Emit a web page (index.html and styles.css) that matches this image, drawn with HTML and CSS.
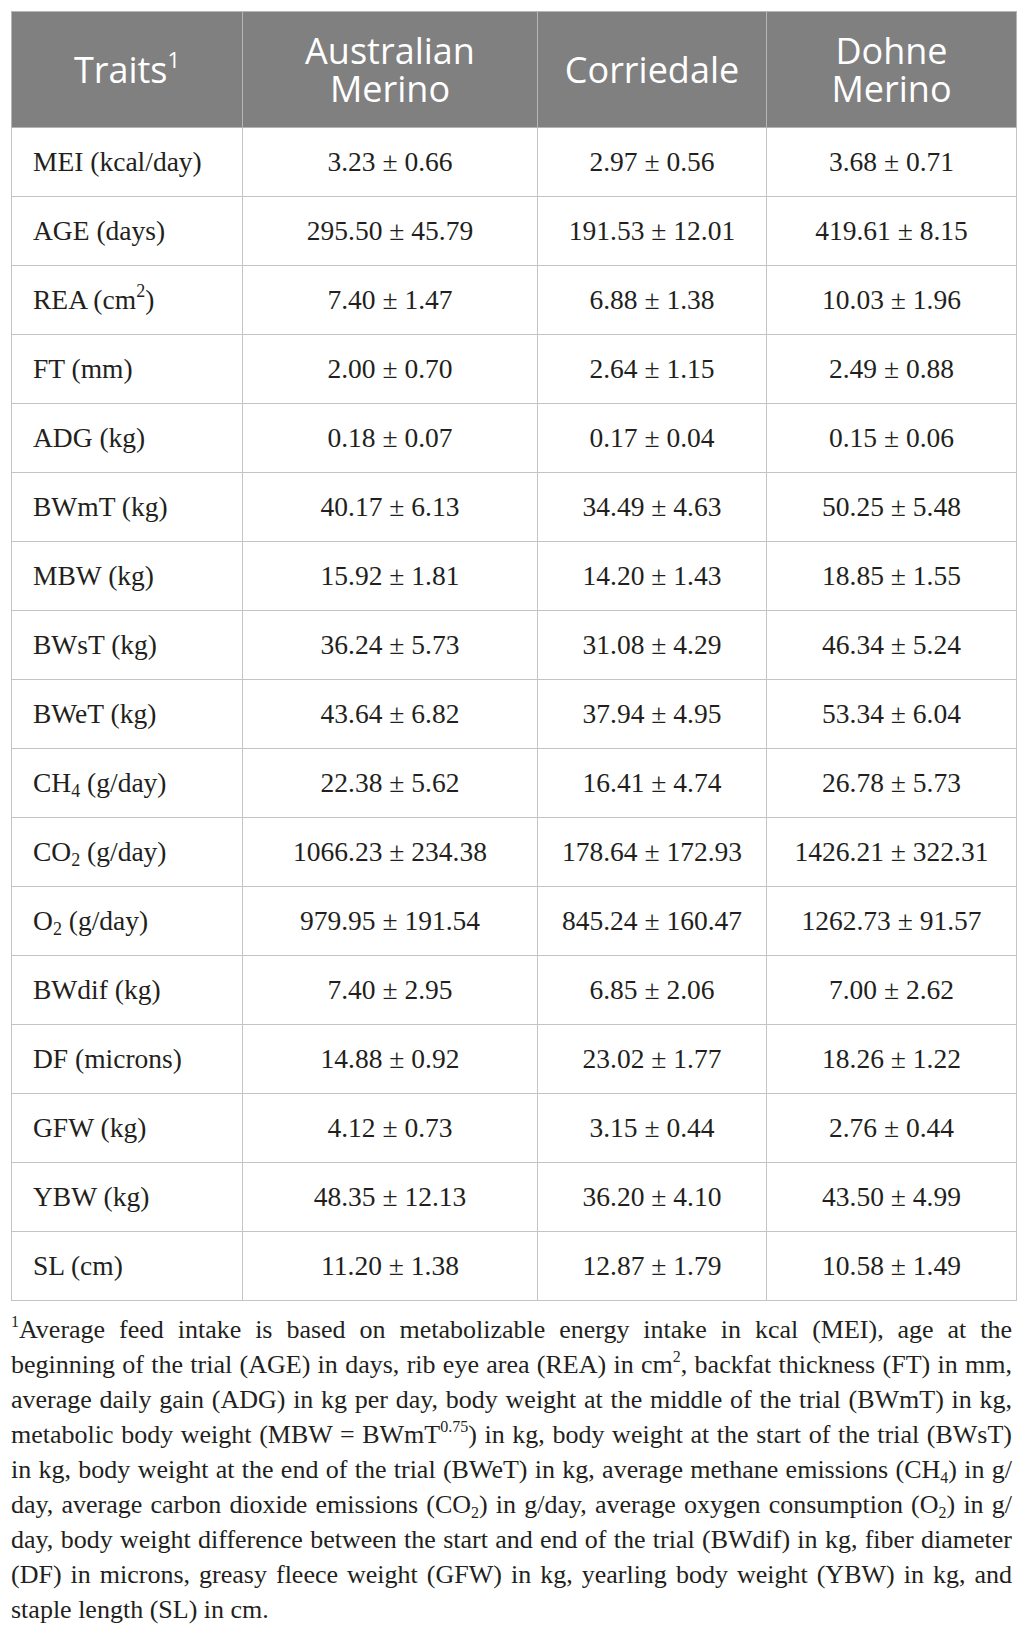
FILE: index.html
```html
<!DOCTYPE html>
<html lang="en">

<head>
    <meta charset="UTF-8">
    <meta name="viewport" content="width=device-width, initial-scale=1.0">
    <title>Traits by breed</title>
    <link rel="stylesheet" href="styles.css">
</head>

<body>
    <div class="tableWrap">
        <table class="traits">
            <thead>
                <tr>
                    <th class="colTrait">Traits<sup>1</sup></th>
                    <th class="colAm">Australian<br>Merino</th>
                    <th class="colCo">Corriedale</th>
                    <th class="colDm">Dohne<br>Merino</th>
                </tr>
            </thead>
            <tbody>
                <tr><td>MEI (kcal/day)</td><td>3.23 ± 0.66</td><td>2.97 ± 0.56</td><td>3.68 ± 0.71</td></tr>
                <tr><td>AGE (days)</td><td>295.50 ± 45.79</td><td>191.53 ± 12.01</td><td>419.61 ± 8.15</td></tr>
                <tr><td>REA (cm<sup>2</sup>)</td><td>7.40 ± 1.47</td><td>6.88 ± 1.38</td><td>10.03 ± 1.96</td></tr>
                <tr><td>FT (mm)</td><td>2.00 ± 0.70</td><td>2.64 ± 1.15</td><td>2.49 ± 0.88</td></tr>
                <tr><td>ADG (kg)</td><td>0.18 ± 0.07</td><td>0.17 ± 0.04</td><td>0.15 ± 0.06</td></tr>
                <tr><td>BWmT (kg)</td><td>40.17 ± 6.13</td><td>34.49 ± 4.63</td><td>50.25 ± 5.48</td></tr>
                <tr><td>MBW (kg)</td><td>15.92 ± 1.81</td><td>14.20 ± 1.43</td><td>18.85 ± 1.55</td></tr>
                <tr><td>BWsT (kg)</td><td>36.24 ± 5.73</td><td>31.08 ± 4.29</td><td>46.34 ± 5.24</td></tr>
                <tr><td>BWeT (kg)</td><td>43.64 ± 6.82</td><td>37.94 ± 4.95</td><td>53.34 ± 6.04</td></tr>
                <tr><td>CH<sub>4</sub> (g/day)</td><td>22.38 ± 5.62</td><td>16.41 ± 4.74</td><td>26.78 ± 5.73</td></tr>
                <tr><td>CO<sub>2</sub> (g/day)</td><td>1066.23 ± 234.38</td><td>178.64 ± 172.93</td><td>1426.21 ± 322.31</td></tr>
                <tr><td>O<sub>2</sub> (g/day)</td><td>979.95 ± 191.54</td><td>845.24 ± 160.47</td><td>1262.73 ± 91.57</td></tr>
                <tr><td>BWdif (kg)</td><td>7.40 ± 2.95</td><td>6.85 ± 2.06</td><td>7.00 ± 2.62</td></tr>
                <tr><td>DF (microns)</td><td>14.88 ± 0.92</td><td>23.02 ± 1.77</td><td>18.26 ± 1.22</td></tr>
                <tr><td>GFW (kg)</td><td>4.12 ± 0.73</td><td>3.15 ± 0.44</td><td>2.76 ± 0.44</td></tr>
                <tr><td>YBW (kg)</td><td>48.35 ± 12.13</td><td>36.20 ± 4.10</td><td>43.50 ± 4.99</td></tr>
                <tr><td>SL (cm)</td><td>11.20 ± 1.38</td><td>12.87 ± 1.79</td><td>10.58 ± 1.49</td></tr>
            </tbody>
        </table>
        <!-- 每行按原图断行，两端对齐 -->
        <p class="footnote">
            <span class="ln"><sup>1</sup>Average feed intake is based on metabolizable energy intake in kcal (MEI), age at the</span>
            <span class="ln">beginning of the trial (AGE) in days, rib eye area (REA) in cm<sup>2</sup>, backfat thickness (FT) in mm,</span>
            <span class="ln">average daily gain (ADG) in kg per day, body weight at the middle of the trial (BWmT) in kg,</span>
            <span class="ln">metabolic body weight (MBW = BWmT<sup>0.75</sup>) in kg, body weight at the start of the trial (BWsT)</span>
            <span class="ln">in kg, body weight at the end of the trial (BWeT) in kg, average methane emissions (CH<sub>4</sub>) in g/</span>
            <span class="ln">day, average carbon dioxide emissions (CO<sub>2</sub>) in g/day, average oxygen consumption (O<sub>2</sub>) in g/</span>
            <span class="ln">day, body weight difference between the start and end of the trial (BWdif) in kg, fiber diameter</span>
            <span class="ln">(DF) in microns, greasy fleece weight (GFW) in kg, yearling body weight (YBW) in kg, and</span>
            <span class="ln last">staple length (SL) in cm.</span>
        </p>
    </div>
</body>

</html>
```

FILE: styles.css
```css
* {
    margin: 0;
    padding: 0;
}

body {
    background: #fff;
    color: #231f20;
    font-family: "Liberation Serif", "Times New Roman", serif;
}

.tableWrap {
    box-sizing: border-box;
    width: 1023px;
    padding: 11px 11px 0 11px;
}

.traits {
    width: 1001px;
    border-collapse: collapse;
    table-layout: fixed;
}

.traits th {
    height: 115px;
    background: #808080;
    color: #fff;
    font-family: "Open Sans", "Noto Sans", sans-serif;
    font-weight: 400;
    font-size: 36px;
    line-height: 38px;
    text-align: center;
    vertical-align: middle;
    border: 1px solid #b5b5b5;
}

.traits th sup {
    font-size: 22px;
    line-height: 0;
    vertical-align: 15px;
}

.colTrait {
    width: 230px;
}

.colAm {
    width: 294px;
}

.colCo {
    width: 228px;
}

.colDm {
    width: 249px;
}

.traits td {
    height: 68px;
    font-size: 27.5px;
    text-align: center;
    vertical-align: middle;
    border: 1px solid #c4c4c4;
    white-space: nowrap;
}

.traits td:first-child {
    text-align: left;
    padding-left: 21px;
}

.traits td sup,
.traits td sub {
    font-size: 18px;
    line-height: 0;
}

.traits td sup {
    vertical-align: 12px;
}

.traits td sub {
    vertical-align: -5px;
}

.footnote {
    width: 1001px;
    margin-top: 11px;
    font-size: 26px;
    line-height: 35px;
}

.footnote .ln {
    display: block;
    white-space: nowrap;
    text-align: justify;
    text-align-last: justify;
}

.footnote .ln.last {
    text-align-last: left;
}

.footnote sup,
.footnote sub {
    font-size: 16px;
    line-height: 0;
}

.footnote sup {
    vertical-align: 11px;
}

.footnote sub {
    vertical-align: -5px;
}
```
